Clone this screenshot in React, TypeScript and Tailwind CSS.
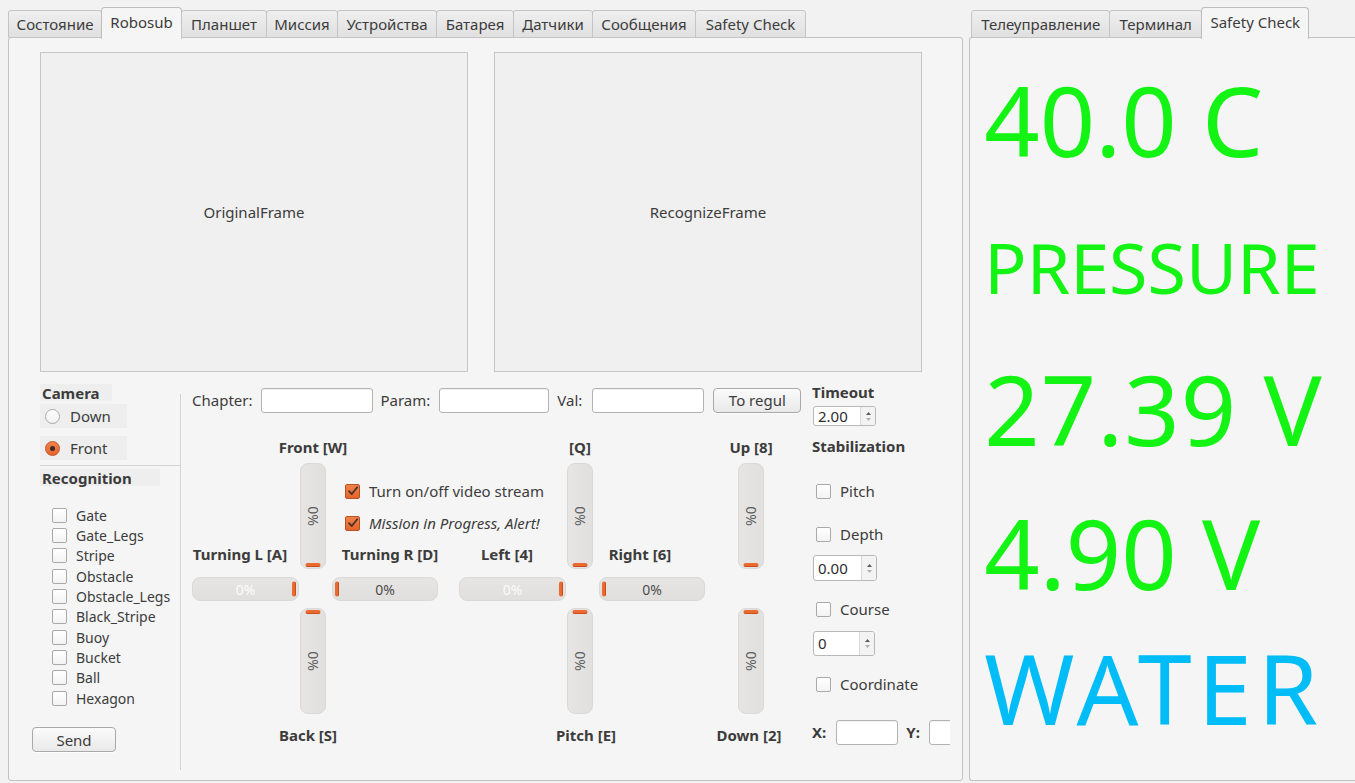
import React from "react";

const FONT = "font-['Noto_Sans','DejaVu_Sans',sans-serif]";

type TabDef = { label: string; w: number; active?: boolean };

function TabBar({ tabs }: { tabs: TabDef[] }) {
  return (
    <div className="flex items-end h-[31px] relative z-10">
      {tabs.map((t, i) => (
        <div
          key={i}
          style={{ width: t.w }}
          className={
            t.active
              ? "h-[32px] -mb-px -ml-px first:ml-0 flex items-center justify-center pb-[3px] rounded-t-[4px] border border-b-0 border-[#bdbdbd] bg-[#f5f5f5] text-[15px] text-[#3c3c3c] whitespace-nowrap"
              : "h-[28px] -ml-px first:ml-0 flex items-center justify-center rounded-t-[3px] border border-[#c4c4c4] bg-gradient-to-b from-[#efefef] to-[#e0e0e0] text-[15px] text-[#3c3c3c] whitespace-nowrap"
          }
        >
          {t.label}
        </div>
      ))}
    </div>
  );
}

function CheckBox({ checked = false }: { checked?: boolean }) {
  if (checked) {
    return (
      <span className="w-[15px] h-[15px] shrink-0 rounded-[2px] border border-[#b9501f] bg-gradient-to-b from-[#f0824d] to-[#e4642c] flex items-center justify-center">
        <svg width="12" height="12" viewBox="0 0 12 12">
          <path d="M2 6.2 L4.8 9 L10.2 2.2" fill="none" stroke="#4a3122" strokeWidth="1.8" strokeLinecap="round" strokeLinejoin="round" />
        </svg>
      </span>
    );
  }
  return <span className="w-[15px] h-[15px] shrink-0 rounded-[2px] border border-[#a9a9a9] bg-gradient-to-b from-[#ffffff] to-[#f3f3f3]" />;
}

function Radio({ checked = false }: { checked?: boolean }) {
  if (checked) {
    return (
      <span className="w-[15px] h-[15px] shrink-0 rounded-full border border-[#c4551f] bg-gradient-to-b from-[#f0824d] to-[#e4642c] flex items-center justify-center">
        <span className="w-[5px] h-[5px] rounded-full bg-[#3f2a20]" />
      </span>
    );
  }
  return <span className="w-[15px] h-[15px] shrink-0 rounded-full border border-[#a9a9a9] bg-gradient-to-b from-[#ffffff] to-[#f1f1f1]" />;
}

function CheckRow({ label, checked, italic }: { label: string; checked?: boolean; italic?: boolean }) {
  return (
    <div className="h-[20px] flex items-center gap-[9px] whitespace-nowrap">
      <CheckBox checked={checked} />
      <span className={italic ? "italic text-[15px] text-[#3c3c3c]" : "text-[15px] text-[#3c3c3c]"}>{label}</span>
    </div>
  );
}

function TextInput({ w }: { w: number }) {
  return (
    <div
      style={{ width: w }}
      className="h-[25px] rounded-[3px] border border-[#b3b3b3] bg-white shadow-[inset_0_1px_1px_rgba(0,0,0,0.06)]"
    />
  );
}

function Button({ label, w }: { label: string; w: number }) {
  return (
    <div
      style={{ width: w }}
      className="h-[25px] rounded-[4px] border border-[#a9a9a9] bg-gradient-to-b from-[#fbfbfb] to-[#e9e9e9] flex items-center justify-center text-[15px] text-[#3c3c3c] shadow-[0_1px_0_rgba(255,255,255,0.8)]"
    >
      {label}
    </div>
  );
}

function SpinBox({ value, w, h }: { value: string; w: number; h: number }) {
  return (
    <div style={{ width: w, height: h }} className="flex rounded-[3px] border border-[#b8b8b8] bg-white overflow-hidden">
      <div className="flex-1 flex items-center pl-[4px] text-[15px] text-[#2e2e2e]">{value}</div>
      <div className="w-[15px] border-l border-[#dadada] bg-[#f3f3f3] flex flex-col items-center justify-center gap-[3px]">
        <svg width="5" height="3" viewBox="0 0 5 3">
          <path d="M0 3 L2.5 0 L5 3 Z" fill="#5a5a5a" />
        </svg>
        <svg width="5" height="3" viewBox="0 0 5 3">
          <path d="M0 0 L2.5 3 L5 0 Z" fill="#b0b0b0" />
        </svg>
      </div>
    </div>
  );
}

// Vertical thrust gauge; the orange marker shows the zero end
function VBar({ mark }: { mark: "top" | "bottom" }) {
  return (
    <div className="relative w-[26px] h-[106px] rounded-[8px] border border-[#dad9d8] bg-gradient-to-r from-[#e6e5e4] to-[#e1e0df] flex items-center justify-center">
      <span className="rotate-90 text-[14px] leading-none text-[#5c5c5c] whitespace-nowrap">0%</span>
      <div
        className={
          mark === "top"
            ? "absolute top-[1px] left-1/2 -translate-x-1/2 w-[15px] h-[4px] rounded-[2px] bg-[#ea6a30] border-b border-[#c54e1d]"
            : "absolute bottom-[1px] left-1/2 -translate-x-1/2 w-[15px] h-[4px] rounded-[2px] bg-[#ea6a30] border-b border-[#c54e1d]"
        }
      />
    </div>
  );
}

// Horizontal thrust gauge
function HBar({ side, w }: { side: "left" | "right"; w: number }) {
  return (
    <div
      style={{ width: w }}
      className="relative h-[24px] rounded-[8px] border border-[#dad9d8] bg-gradient-to-b from-[#e6e5e4] to-[#e0dfde] flex items-center justify-center"
    >
      <span className={side === "left" ? "text-[14px] text-[#fbfbfb]" : "text-[14px] text-[#4e4e4e]"}>0%</span>
      <div
        className={
          side === "left"
            ? "absolute right-[2px] top-1/2 -translate-y-1/2 w-[4px] h-[15px] rounded-[2px] bg-[#ea6a30] border-r border-[#c54e1d]"
            : "absolute left-[2px] top-1/2 -translate-y-1/2 w-[4px] h-[15px] rounded-[2px] bg-[#ea6a30] border-r border-[#c54e1d]"
        }
      />
    </div>
  );
}

function BoldLabel({ children }: { children: React.ReactNode }) {
  return <span className="font-bold text-[15px] leading-[16px] text-[#3c3c3c] whitespace-nowrap">{children}</span>;
}

function Cross({
  top,
  bottom,
  left,
  right,
  extra,
  rightCls,
  bottomCls,
}: {
  top: string;
  bottom: string;
  left: string;
  right: string;
  extra?: React.ReactNode;
  rightCls: string;
  bottomCls: string;
}) {
  return (
    <div className="grid grid-cols-[108px_26px_112px] grid-rows-[24px_114px_31px_106px_auto]">
      <div className="col-start-2 row-start-1 flex justify-center h-[16px]">
        <BoldLabel>{top}</BoldLabel>
      </div>
      <div className="col-start-1 row-start-2 flex items-end justify-center pb-[15px] pr-[12px]">
        <BoldLabel>{left}</BoldLabel>
      </div>
      <div className="col-start-2 row-start-2">
        <VBar mark="bottom" />
      </div>
      <div className="col-start-3 row-start-2 relative">
        {extra}
        <div className={rightCls}>
          <BoldLabel>{right}</BoldLabel>
        </div>
      </div>
      <div className="col-start-1 row-start-3">
        <HBar side="left" w={107} />
      </div>
      <div className="col-start-3 row-start-3 flex justify-end">
        <HBar side="right" w={106} />
      </div>
      <div className="col-start-2 row-start-4">
        <VBar mark="top" />
      </div>
      <div className={bottomCls}>
        <BoldLabel>{bottom}</BoldLabel>
      </div>
    </div>
  );
}

function Column({ top, bottom }: { top: string; bottom: string }) {
  return (
    <div className="grid grid-cols-[26px] grid-rows-[24px_114px_31px_106px_auto]">
      <div className="row-start-1 flex justify-center h-[16px]">
        <BoldLabel>{top}</BoldLabel>
      </div>
      <div className="row-start-2">
        <VBar mark="bottom" />
      </div>
      <div className="row-start-4">
        <VBar mark="top" />
      </div>
      <div className="row-start-5 flex justify-center mt-[13px] pr-[4px]">
        <BoldLabel>{bottom}</BoldLabel>
      </div>
    </div>
  );
}

const leftTabs: TabDef[] = [
  { label: "Состояние", w: 94 },
  { label: "Robosub", w: 81, active: true },
  { label: "Планшет", w: 86 },
  { label: "Миссия", w: 72 },
  { label: "Устройства", w: 100 },
  { label: "Батарея", w: 78 },
  { label: "Датчики", w: 80 },
  { label: "Сообщения", w: 104 },
  { label: "Safety Check", w: 111 },
];

const rightTabs: TabDef[] = [
  { label: "Телеуправление", w: 139 },
  { label: "Терминал", w: 93 },
  { label: "Safety Check", w: 108, active: true },
];

const targets = [
  "Gate",
  "Gate_Legs",
  "Stripe",
  "Obstacle",
  "Obstacle_Legs",
  "Black_Stripe",
  "Buoy",
  "Bucket",
  "Ball",
  "Hexagon",
];

export default function App() {
  return (
    <div className={`${FONT} w-[1355px] h-[783px] overflow-hidden bg-[#f2f2f2] flex items-start pt-[7px]`}>
      {/* Main tab widget */}
      <div className="ml-[8px] w-[956px] flex flex-col">
        <TabBar tabs={leftTabs} />
        <div className="h-[744px] -mt-px rounded-[3px] border border-[#c2c2c2] bg-[#f5f5f5] pl-[31px] pt-[14px]">
          {/* Camera frames */}
          <div className="flex gap-[26px]">
            <div className="w-[428px] h-[320px] border border-[#c6c6c6] bg-[#f0f0f0] flex items-center justify-center text-[15px] text-[#3c3c3c]">
              OriginalFrame
            </div>
            <div className="w-[428px] h-[320px] border border-[#c6c6c6] bg-[#f0f0f0] flex items-center justify-center text-[15px] text-[#3c3c3c]">
              RecognizeFrame
            </div>
          </div>

          <div className="flex">
            {/* Camera / recognition column */}
            <div className="w-[140px] flex flex-col">
              <div className="mt-[12px] w-[72px] h-[17px] bg-[#eeeeee] flex items-center pl-[2px]">
                <BoldLabel>Camera</BoldLabel>
              </div>
              <div className="mt-[3px] w-[87px] h-[24px] bg-[#eeeeee] flex items-center gap-[10px] pl-[5px]">
                <Radio />
                <span className="text-[15px] text-[#3c3c3c]">Down</span>
              </div>
              <div className="mt-[8px] w-[87px] h-[24px] bg-[#eeeeee] flex items-center gap-[10px] pl-[5px]">
                <Radio checked />
                <span className="text-[15px] text-[#3c3c3c]">Front</span>
              </div>
              <div className="mt-[5px] h-px w-[141px] bg-[#d4d4d4]" />
              <div className="mt-[3px] w-[120px] h-[17px] bg-[#eeeeee] flex items-center pl-[2px]">
                <BoldLabel>Recognition</BoldLabel>
              </div>
              <div className="mt-[19px] pl-[12px] flex flex-col">
                {targets.map((t) => (
                  <div key={t} className="h-[20.33px] flex items-center gap-[9px]">
                    <CheckBox />
                    <span className="text-[14px] text-[#3c3c3c]">{t}</span>
                  </div>
                ))}
              </div>
              <div className="mt-[19px] -ml-[8px]">
                <Button label="Send" w={84} />
              </div>
            </div>

            <div className="mt-[22px] w-px h-[376px] bg-[#d4d4d4]" />

            {/* Manual control area */}
            <div className="w-[631px] pl-[11px] flex flex-col">
              <div className="mt-[16px] flex items-center h-[25px]">
                <span className="text-[15px] text-[#3c3c3c]">Chapter:</span>
                <div className="ml-[9px]">
                  <TextInput w={112} />
                </div>
                <span className="ml-[7px] text-[15px] text-[#3c3c3c]">Param:</span>
                <div className="ml-[9px]">
                  <TextInput w={110} />
                </div>
                <span className="ml-[8px] text-[15px] text-[#3c3c3c]">Val:</span>
                <div className="ml-[10px]">
                  <TextInput w={112} />
                </div>
                <div className="ml-[9px]">
                  <Button label="To regul" w={88} />
                </div>
              </div>

              <div className="mt-[26px] flex">
                <Cross
                  top="Front [W]"
                  bottom="Back [S]"
                  left="Turning L [A]"
                  right="Turning R [D]"
                  rightCls="absolute bottom-[15px] left-0 right-0 flex justify-center pl-[16px]"
                  bottomCls="col-start-2 row-start-5 flex justify-center mt-[13px] pr-[10px]"
                  extra={
                    <div className="pl-[19px] pt-[18px] flex flex-col gap-[12px]">
                      <CheckRow label="Turn on/off video stream" checked />
                      <CheckRow label="Mission in Progress, Alert!" checked italic />
                    </div>
                  }
                />
                <div className="ml-[21px]">
                  <Cross
                    top="[Q]"
                    bottom="Pitch [E]"
                    left="Left [4]"
                    right="Right [6]"
                    rightCls="absolute bottom-[15px] left-0 right-0 flex justify-center pr-[18px]"
                    bottomCls="col-start-2 row-start-5 flex justify-center mt-[13px] pl-[12px]"
                  />
                </div>
                <div className="ml-[33px]">
                  <Column top="Up [8]" bottom="Down [2]" />
                </div>
              </div>
            </div>

            {/* Stabilization column */}
            <div className="w-[138px] overflow-hidden flex flex-col">
              <div className="mt-[8px] h-[16px]">
                <BoldLabel>Timeout</BoldLabel>
              </div>
              <div className="mt-[10px] ml-px">
                <SpinBox value="2.00" w={63} h={20} />
              </div>
              <div className="mt-[8px] h-[16px]">
                <BoldLabel>Stabilization</BoldLabel>
              </div>
              <div className="mt-[31px] pl-[4px]">
                <CheckRow label="Pitch" />
              </div>
              <div className="mt-[23px] pl-[4px]">
                <CheckRow label="Depth" />
              </div>
              <div className="mt-[11px] ml-px">
                <SpinBox value="0.00" w={64} h={26} />
              </div>
              <div className="mt-[18px] pl-[4px]">
                <CheckRow label="Course" />
              </div>
              <div className="mt-[12px] ml-px">
                <SpinBox value="0" w={62} h={25} />
              </div>
              <div className="mt-[18px] pl-[4px]">
                <CheckRow label="Coordinate" />
              </div>
              <div className="mt-[25px] flex items-center h-[26px] whitespace-nowrap">
                <span className="font-bold text-[15px] text-[#3c3c3c]">X:</span>
                <div className="ml-[10px] shrink-0">
                  <TextInput w={62} />
                </div>
                <span className="ml-[8px] font-bold text-[15px] text-[#3c3c3c]">Y:</span>
                <div className="ml-[9px] shrink-0">
                  <TextInput w={62} />
                </div>
              </div>
            </div>
          </div>
        </div>
      </div>

      {/* Side tab widget with sensor readouts */}
      <div className="ml-[6px] w-[386px] flex flex-col">
        <div className="pl-[2px]">
          <TabBar tabs={rightTabs} />
        </div>
        <div className="h-[744px] -mt-px rounded-l-[3px] border border-r-0 border-[#c2c2c2] bg-[#f5f5f5] pl-[14px] flex flex-col">
          <div className="mt-[33px] h-[97px] text-[97px] leading-none text-[#14f414] whitespace-nowrap">40.0 C</div>
          <div className="mt-[64px] h-[70px] text-[70px] leading-none text-[#14f414] whitespace-nowrap">PRESSURE</div>
          <div className="mt-[58px] h-[97px] text-[97px] leading-none text-[#14f414] whitespace-nowrap tracking-[1px]">27.39 V</div>
          <div className="mt-[47px] h-[97px] text-[97px] leading-none text-[#14f414] whitespace-nowrap">4.90 V</div>
          <div className="mt-[38px] h-[97px] text-[97px] leading-none text-[#00bdf7] whitespace-nowrap tracking-[6px]">WATER</div>
        </div>
      </div>
    </div>
  );
}
